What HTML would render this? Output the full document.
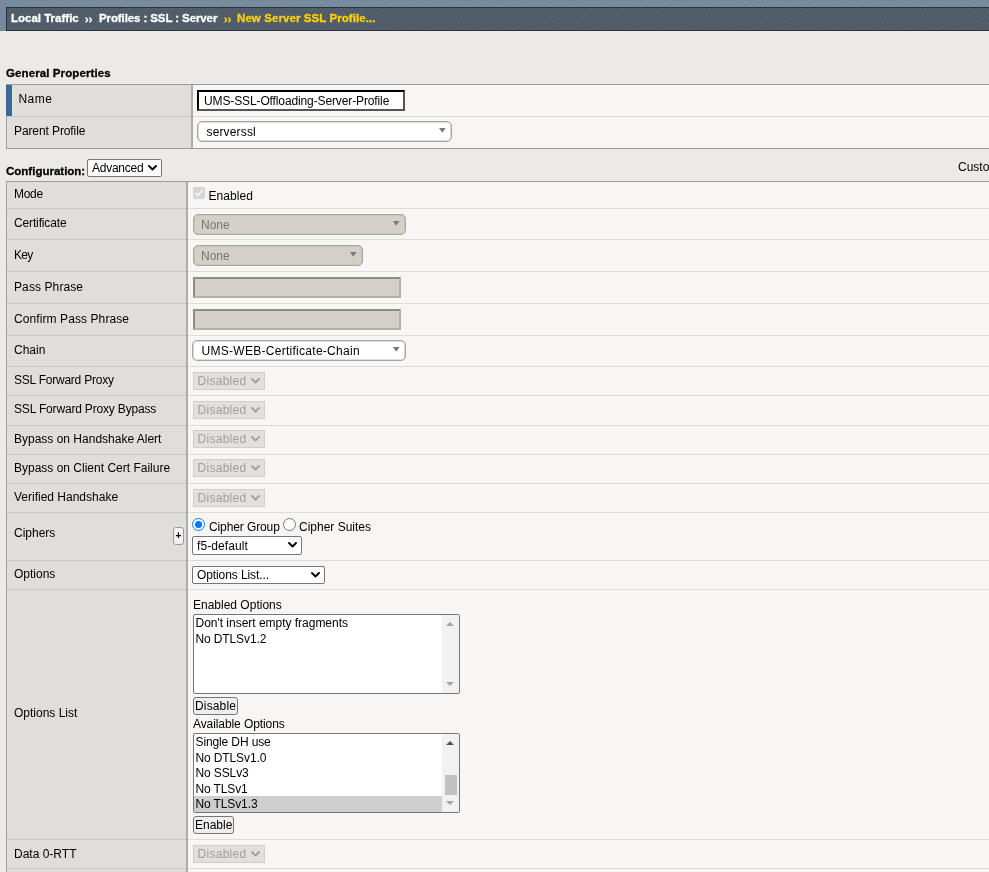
<!DOCTYPE html>
<html>
<head>
<meta charset="utf-8">
<title>New Server SSL Profile</title>
<style>
html,body{margin:0;padding:0;}
body{width:989px;height:872px;overflow:hidden;background:#ebeae6;font-family:"Liberation Sans",Arial,sans-serif;font-size:12px;color:#000;position:relative;}
div,span{box-sizing:border-box;}
#w{position:absolute;left:0;top:0;width:989px;height:872px;overflow:hidden;will-change:transform;}
.a{position:absolute;}
#hdr{left:0;top:0;width:989px;height:31px;background:#76899c;background-image:repeating-linear-gradient(120deg,rgba(255,255,255,0.05) 0,rgba(255,255,255,0.05) 1px,rgba(0,0,0,0.012) 1px,rgba(0,0,0,0.012) 3.4px);}
#bar{left:6px;top:7px;width:990px;height:24px;border:1px solid #2c3239;background:#505c6a;background-image:repeating-linear-gradient(120deg,rgba(255,255,255,0.04) 0,rgba(255,255,255,0.04) 1px,rgba(0,0,0,0.01) 1px,rgba(0,0,0,0.01) 3.4px);}
#crumb{-webkit-text-stroke:0.3px;left:11px;top:11px;font-weight:bold;font-size:11.5px;color:#fff;white-space:pre;letter-spacing:0;line-height:14px;}
#crumb .y{color:#ffd200;}
.h{-webkit-text-stroke:0.3px;left:6px;font-weight:bold;font-size:11.5px;letter-spacing:0;line-height:14px;white-space:pre;}
.t{line-height:14px;white-space:pre;}
.row{left:6px;width:990px;border-top:1px solid #dddcd9;background:#f7f6f4;}
.row .lc{position:absolute;left:0;top:-1px;bottom:0;background:#dfdedb;border-left:1px solid #a3a29e;border-right:2px solid #adaca8;}
.row.first{border-top:1px solid #9c9b97;}
.row.first .lc{top:0;}
.row .lc.sepd{}
.lsep{left:7px;height:1px;background:#c9c8c4;}
.sel{height:18px;border:1px solid #767676;border-radius:2px;background:#fff;line-height:16px;padding-left:4px;white-space:pre;letter-spacing:-0.1px;}
.sel svg{position:absolute;right:4px;top:5px;}
.fsel svg{position:absolute;right:5px;top:6px;}
.sel.dis{border-color:#cfcecb;background:#e1e0dc;color:#a09f9c;border-radius:0;}
.fsel{box-shadow:inset 0 0 0 0.6px #bdbcb8;height:21px;border:1px solid #a6a5a2;border-radius:5px;background:#fff;line-height:21px;padding-left:8.5px;white-space:pre;}
.fsel.dis{background:#d4d0c8;color:#77746f;border-color:#a9a6a0;}
.fsel i{position:absolute;right:5.5px;top:6px;width:0;height:0;border-left:3.4px solid transparent;border-right:3.4px solid transparent;border-top:5px solid #7c7c7c;}
.pin{height:21px;background:#d4d0c8;border:2px solid;border-color:#8f8c86 #b4b1ab #b4b1ab #8f8c86;}
.lb{border:1px solid #767676;border-radius:2px;background:#fff;overflow:hidden;}
.lb .o{position:absolute;left:1.5px;white-space:pre;line-height:14px;letter-spacing:-0.12px;}
.lb .sb{position:absolute;right:0;top:0;bottom:0;width:17px;background:#f1f1f1;}
.tri-u{position:absolute;width:0;height:0;border-left:4px solid transparent;border-right:4px solid transparent;border-bottom:4px solid #a3a3a3;}
.tri-d{position:absolute;width:0;height:0;border-left:4px solid transparent;border-right:4px solid transparent;border-top:4px solid #a3a3a3;}
.btn{height:18px;border:1px solid #767676;border-radius:3px;background:#efefef;line-height:16px;text-align:center;white-space:pre;}
</style>
</head>
<body>
<div id="w">
<div id="hdr" class="a"></div>
<div id="bar" class="a"></div>
<div id="crumb" class="a"><span id="c1">Local Traffic</span><span id="c2" class="a" style="left:74px;top:1px;font-size:11px">››</span><span id="c3" class="a" style="left:88px;top:0;letter-spacing:-0.1px">Profiles : SSL : Server</span><span class="y"><span id="c4" class="a" style="left:213px;top:1px;font-size:11px">››</span><span id="c5" class="a" style="left:226px;top:0;letter-spacing:0.08px">New Server SSL Profile...</span></span></div>
<div class="a h" style="top:66px;letter-spacing:0.1px">General Properties</div>
<div class="a row first" style="top:84px;height:32px"><div class="lc" style="width:187px;border-left:6px solid #3a699e"></div></div>
<div class="a row" style="top:116px;height:33px;border-bottom:1px solid #9c9b97"><div class="lc" style="width:187px"></div></div>
<div class="a lsep" style="top:116px;width:184px;left:7px"></div>
<div class="a t" style="left:18.5px;top:92px;letter-spacing:0.45px">Name</div>
<div class="a t" style="left:14px;top:124px;letter-spacing:-0.1px">Parent Profile</div>
<div class="a" style="left:197px;top:90px;width:208px;height:21px;background:#fff;border:2px solid;border-color:#000 #555 #555 #000;"></div>
<div class="a t" style="left:204px;top:94px;letter-spacing:-0.12px">UMS-SSL-Offloading-Server-Profile</div>
<div class="a fsel" style="left:197px;top:121px;width:255px;letter-spacing:0.15px">serverssl<svg width="7" height="5" viewBox="0 0 7 5"><polygon points="0,0 6.6,0 3.3,4.8" fill="#7a7a7a"/></svg></div>
<div class="a h" style="top:164px">Configuration:</div>
<div class="a sel" style="left:87px;top:159px;width:75px;letter-spacing:-0.25px">Advanced<svg width="9" height="6" viewBox="0 0 9 6"><polyline points="1,1 4.5,4.5 8,1" fill="none" stroke="#000" stroke-width="1.9" stroke-linecap="round" stroke-linejoin="round"/></svg></div>
<div class="a t" style="left:958px;top:160px">Custom</div>
<div class="a row first" style="top:181px;height:27px"><div class="lc" style="width:182px"></div></div>
<div class="a t" style="left:14px;top:187px;letter-spacing:-0.30px">Mode</div>
<div class="a row" style="top:208px;height:31px"><div class="lc" style="width:182px"></div></div>
<div class="a lsep" style="top:208px;width:179px"></div>
<div class="a t" style="left:14px;top:216px;letter-spacing:-0.14px">Certificate</div>
<div class="a row" style="top:239px;height:32px"><div class="lc" style="width:182px"></div></div>
<div class="a lsep" style="top:239px;width:179px"></div>
<div class="a t" style="left:14px;top:248px;letter-spacing:-0.70px">Key</div>
<div class="a row" style="top:271px;height:32px"><div class="lc" style="width:182px"></div></div>
<div class="a lsep" style="top:271px;width:179px"></div>
<div class="a t" style="left:14px;top:280px;letter-spacing:0.10px">Pass Phrase</div>
<div class="a row" style="top:303px;height:32px"><div class="lc" style="width:182px"></div></div>
<div class="a lsep" style="top:303px;width:179px"></div>
<div class="a t" style="left:14px;top:312px;letter-spacing:0.09px">Confirm Pass Phrase</div>
<div class="a row" style="top:335px;height:31px"><div class="lc" style="width:182px"></div></div>
<div class="a lsep" style="top:335px;width:179px"></div>
<div class="a t" style="left:14px;top:343px">Chain</div>
<div class="a row" style="top:366px;height:29px"><div class="lc" style="width:182px"></div></div>
<div class="a lsep" style="top:366px;width:179px"></div>
<div class="a t" style="left:14px;top:373px;letter-spacing:-0.23px">SSL Forward Proxy</div>
<div class="a row" style="top:395px;height:30px"><div class="lc" style="width:182px"></div></div>
<div class="a lsep" style="top:395px;width:179px"></div>
<div class="a t" style="left:14px;top:402px;letter-spacing:-0.17px">SSL Forward Proxy Bypass</div>
<div class="a row" style="top:425px;height:29px"><div class="lc" style="width:182px"></div></div>
<div class="a lsep" style="top:425px;width:179px"></div>
<div class="a t" style="left:14px;top:432px">Bypass on Handshake Alert</div>
<div class="a row" style="top:454px;height:29px"><div class="lc" style="width:182px"></div></div>
<div class="a lsep" style="top:454px;width:179px"></div>
<div class="a t" style="left:14px;top:461px">Bypass on Client Cert Failure</div>
<div class="a row" style="top:483px;height:29px"><div class="lc" style="width:182px"></div></div>
<div class="a lsep" style="top:483px;width:179px"></div>
<div class="a t" style="left:14px;top:490px">Verified Handshake</div>
<div class="a row" style="top:512px;height:48px"><div class="lc" style="width:182px"></div></div>
<div class="a lsep" style="top:512px;width:179px"></div>
<div class="a t" style="left:14px;top:526px">Ciphers</div>
<div class="a row" style="top:560px;height:29px"><div class="lc" style="width:182px"></div></div>
<div class="a lsep" style="top:560px;width:179px"></div>
<div class="a t" style="left:14px;top:567px">Options</div>
<div class="a row" style="top:589px;height:250px"><div class="lc" style="width:182px"></div></div>
<div class="a lsep" style="top:589px;width:179px"></div>
<div class="a t" style="left:14px;top:706px">Options List</div>
<div class="a row" style="top:839px;height:29px"><div class="lc" style="width:182px"></div></div>
<div class="a lsep" style="top:839px;width:179px"></div>
<div class="a t" style="left:14px;top:847px">Data 0-RTT</div>
<div class="a row" style="top:868px;height:32px"><div class="lc" style="width:182px"></div></div>
<div class="a lsep" style="top:868px;width:179px"></div>
<div class="a" style="left:193px;top:187px;width:12px;height:12px;background:#d5d5d5;border-radius:2px"><svg width="12" height="12" viewBox="0 0 12 12" style="position:absolute;left:0;top:0"><polyline points="2.5,6.2 4.8,8.6 9.6,2.8" fill="none" stroke="#f4f4f4" stroke-width="1.8"/></svg></div>
<div class="a t" style="left:208.5px;top:189px;letter-spacing:0.05px">Enabled</div>
<div class="a fsel dis" style="left:193px;top:214px;width:213px;padding-left:7px">None<svg width="7" height="5" viewBox="0 0 7 5"><polygon points="0,0 6.6,0 3.3,4.8" fill="#7a7a7a"/></svg></div>
<div class="a fsel dis" style="left:193px;top:245px;width:170px;padding-left:7px">None<svg width="7" height="5" viewBox="0 0 7 5"><polygon points="0,0 6.6,0 3.3,4.8" fill="#7a7a7a"/></svg></div>
<div class="a pin" style="left:193px;top:277px;width:208px"></div>
<div class="a pin" style="left:193px;top:309px;width:208px"></div>
<div class="a fsel" style="left:192px;top:340px;width:214px;padding-left:8.5px;letter-spacing:0.28px">UMS-WEB-Certificate-Chain<svg width="7" height="5" viewBox="0 0 7 5"><polygon points="0,0 6.6,0 3.3,4.8" fill="#7a7a7a"/></svg></div>
<div class="a sel dis" style="left:193px;top:372px;width:72px;padding-left:3.5px;line-height:17px;letter-spacing:0.28px">Disabled<svg width="9" height="6" viewBox="0 0 9 6"><polyline points="1,1 4.5,4.5 8,1" fill="none" stroke="#a2a19e" stroke-width="1.9" stroke-linecap="round" stroke-linejoin="round"/></svg></div>
<div class="a sel dis" style="left:193px;top:401px;width:72px;padding-left:3.5px;line-height:17px;letter-spacing:0.28px">Disabled<svg width="9" height="6" viewBox="0 0 9 6"><polyline points="1,1 4.5,4.5 8,1" fill="none" stroke="#a2a19e" stroke-width="1.9" stroke-linecap="round" stroke-linejoin="round"/></svg></div>
<div class="a sel dis" style="left:193px;top:430px;width:72px;padding-left:3.5px;line-height:17px;letter-spacing:0.28px">Disabled<svg width="9" height="6" viewBox="0 0 9 6"><polyline points="1,1 4.5,4.5 8,1" fill="none" stroke="#a2a19e" stroke-width="1.9" stroke-linecap="round" stroke-linejoin="round"/></svg></div>
<div class="a sel dis" style="left:193px;top:459px;width:72px;padding-left:3.5px;line-height:17px;letter-spacing:0.28px">Disabled<svg width="9" height="6" viewBox="0 0 9 6"><polyline points="1,1 4.5,4.5 8,1" fill="none" stroke="#a2a19e" stroke-width="1.9" stroke-linecap="round" stroke-linejoin="round"/></svg></div>
<div class="a sel dis" style="left:193px;top:489px;width:72px;padding-left:3.5px;line-height:17px;letter-spacing:0.28px">Disabled<svg width="9" height="6" viewBox="0 0 9 6"><polyline points="1,1 4.5,4.5 8,1" fill="none" stroke="#a2a19e" stroke-width="1.9" stroke-linecap="round" stroke-linejoin="round"/></svg></div>
<div class="a sel dis" style="left:193px;top:845px;width:72px;padding-left:3.5px;line-height:17px;letter-spacing:0.28px">Disabled<svg width="9" height="6" viewBox="0 0 9 6"><polyline points="1,1 4.5,4.5 8,1" fill="none" stroke="#a2a19e" stroke-width="1.9" stroke-linecap="round" stroke-linejoin="round"/></svg></div>
<div class="a" style="left:173px;top:527px;width:11px;height:18px;border:1px solid #9a9a9a;border-radius:3px;background:#f3f3f3;font-size:10px;font-weight:bold;line-height:16px;text-align:center">+</div>
<div class="a" style="left:192px;top:518px;width:13px;height:13px;border-radius:50%;border:1px solid #0d7cff;background:#fff"><div class="a" style="left:1.9px;top:1.9px;width:7.2px;height:7.2px;border-radius:50%;background:#0075ff"></div></div>
<div class="a t" style="left:209px;top:520px;letter-spacing:-0.11px">Cipher Group</div>
<div class="a" style="left:283px;top:518px;width:13px;height:13px;border-radius:50%;border:1px solid #767676;background:#fff"></div>
<div class="a t" style="left:299px;top:520px">Cipher Suites</div>
<div class="a sel" style="left:192px;top:536px;width:110px;height:19px;line-height:17px;padding-top:1px;letter-spacing:0.1px">f5-default<svg width="9" height="6" viewBox="0 0 9 6"><polyline points="1,1 4.5,4.5 8,1" fill="none" stroke="#000" stroke-width="1.9" stroke-linecap="round" stroke-linejoin="round"/></svg></div>
<div class="a sel" style="left:192px;top:566px;width:133px">Options List...<svg width="9" height="6" viewBox="0 0 9 6"><polyline points="1,1 4.5,4.5 8,1" fill="none" stroke="#000" stroke-width="1.9" stroke-linecap="round" stroke-linejoin="round"/></svg></div>
<div class="a t" style="left:193px;top:598px">Enabled Options</div>
<div class="a lb" style="left:193px;top:614px;width:267px;height:80px"><div class="o" style="top:1px;letter-spacing:-0.02px">Don't insert empty fragments</div><div class="o" style="top:17px">No DTLSv1.2</div><div class="sb"><div class="tri-u" style="left:4px;top:7px"></div><div class="tri-d" style="left:4px;bottom:7px"></div></div></div>
<div class="a btn" style="left:193px;top:697px;width:45px;text-align:left;padding-left:1px;letter-spacing:0.15px">Disable</div>
<div class="a t" style="left:193px;top:717px;letter-spacing:-0.09px">Available Options</div>
<div class="a lb" style="left:193px;top:733px;width:267px;height:80px"><div class="a" style="left:0;right:17px;top:62px;height:16px;background:#cecece"></div>
<div class="o" style="top:1.0px">Single DH use</div>
<div class="o" style="top:16.5px">No DTLSv1.0</div>
<div class="o" style="top:32.0px">No SSLv3</div>
<div class="o" style="top:47.5px">No TLSv1</div>
<div class="o" style="top:63.0px">No TLSv1.3</div>
<div class="sb"><div class="tri-u" style="left:4px;top:7px;border-bottom-color:#505050"></div><div class="a" style="left:3px;top:41px;width:12px;height:20px;background:#c1c1c1"></div><div class="tri-d" style="left:4px;bottom:7px"></div></div></div>
<div class="a btn" style="left:193px;top:816px;width:41px;text-align:left;padding-left:1px">Enable</div>
</div>
</body>
</html>
